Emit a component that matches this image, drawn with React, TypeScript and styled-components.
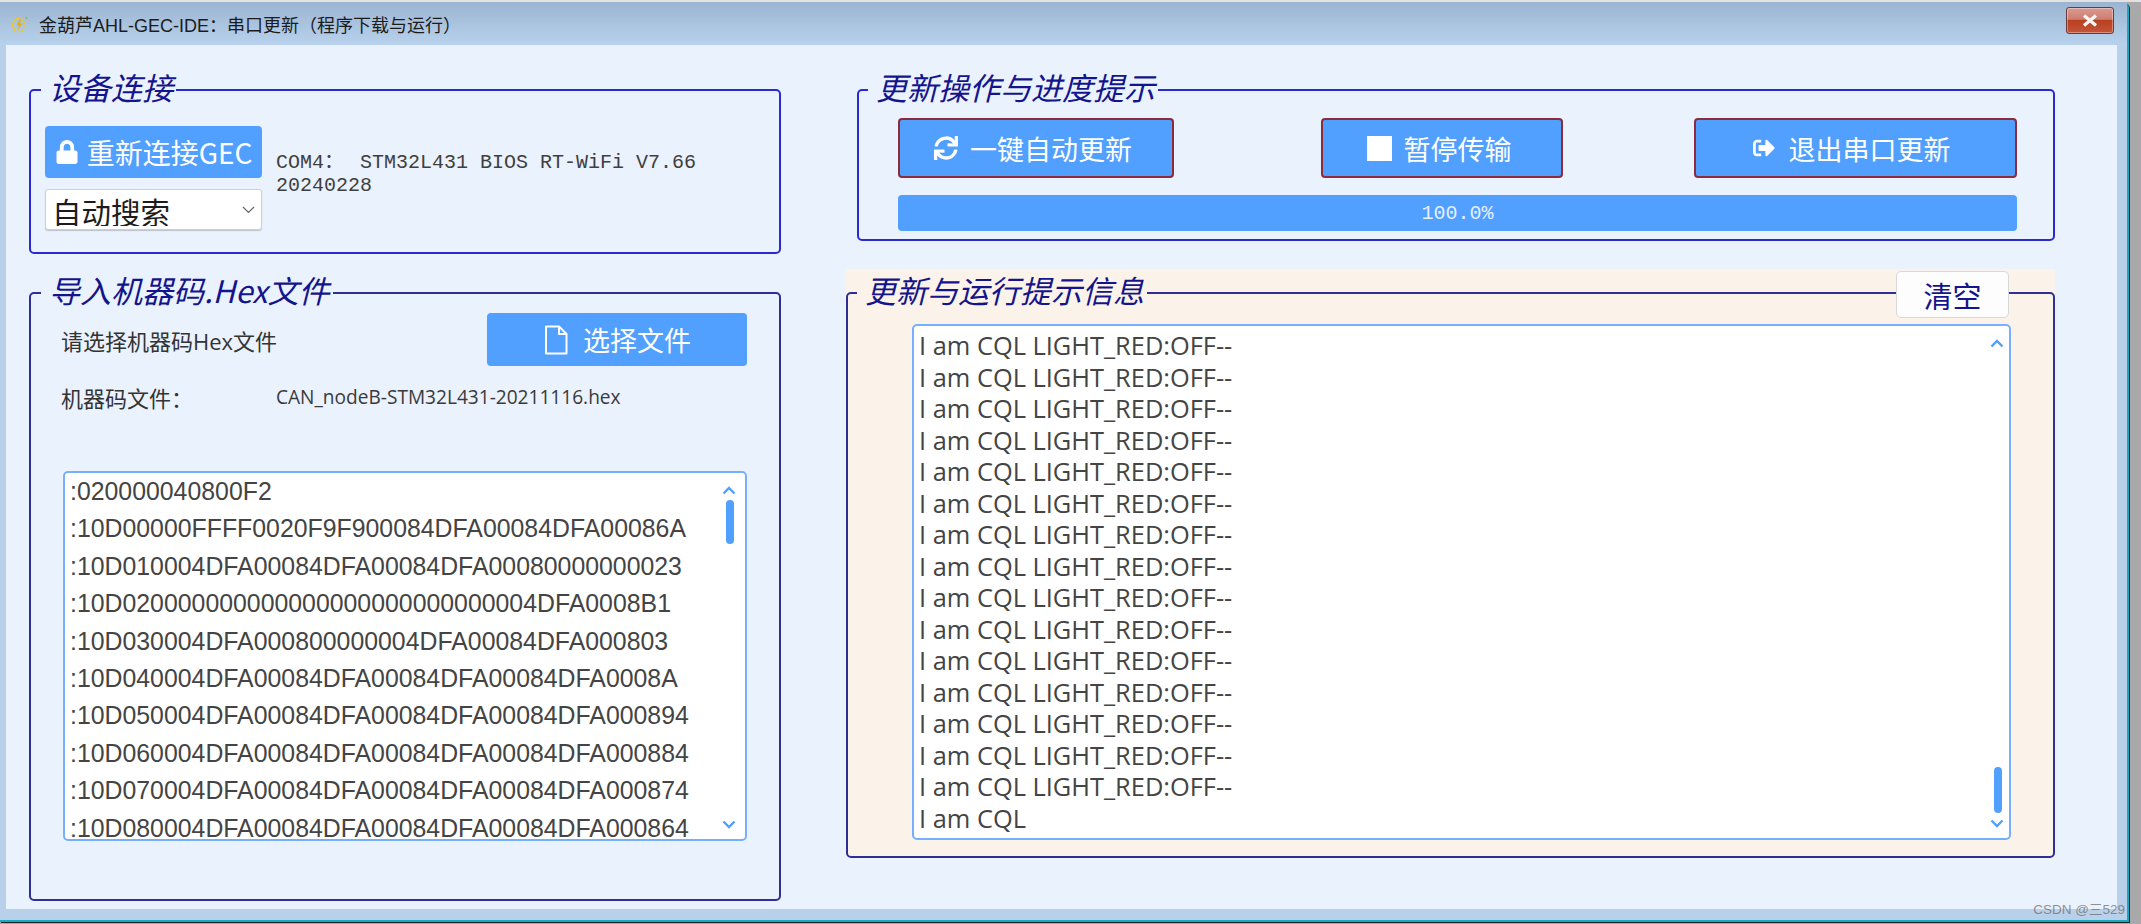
import React from 'react';
import styled, { createGlobalStyle } from 'styled-components';
import { FaLock, FaSignOutAlt, FaSquareFull, FaSync } from 'react-icons/fa';

const CJK = '"Noto Sans CJK SC", sans-serif';
const BLUE = '#519fff';

const GlobalStyle = createGlobalStyle`
  html, body {
    margin: 0;
    padding: 0;
    width: 2141px;
    height: 924px;
    overflow: hidden;
    background: #a9a9a9;
    font-family: "Open Sans", ${CJK};
  }
  * { box-sizing: border-box; }
`;

const Screen = styled.div`
  width: 2141px;
  height: 924px;
  padding-top: 2px;
  background: linear-gradient(#e2e2e2 2px, #a9a9a9 2px);
  position: relative;
`;

const Window = styled.div`
  width: 2129px;
  height: 920px;
  display: flex;
  flex-direction: column;
  background: #b8d0ea;
  border-right: 2px solid #16a9c4;
  border-bottom: 2px solid #16a9c4;
  box-shadow: 1px 1px 0 #222;
  border-top-right-radius: 6px;
`;

const TitleBar = styled.div`
  height: 43px;
  flex: none;
  display: flex;
  align-items: center;
  padding-left: 11px;
  background: linear-gradient(#9bb4d1, #b8d1ec);
`;

const TitleIcon = styled.svg`
  width: 20px;
  height: 24px;
  margin-right: 8px;
`;

const TitleText = styled.span`
  font-size: 18px;
  font-family: "Liberation Sans", ${CJK};
  color: #1c1c1c;
  flex: 1;
`;

const CloseButton = styled.div`
  width: 48px;
  height: 27px;
  margin-right: 13px;
  margin-top: -7px;
  border: 1px solid #6b3a3a;
  border-radius: 3px;
  display: flex;
  align-items: center;
  justify-content: center;
  background: linear-gradient(#d89a90 0, #cf7d70 45%, #b8401f 50%, #c4553a 100%);
  box-shadow: inset 0 0 0 1px rgba(255, 255, 255, 0.35);
`;

const Client = styled.div`
  width: 2111px;
  height: 864px;
  margin-left: 6px;
  padding: 25px 62px 0 23px;
  background: #eaf2fe;
  display: grid;
  grid-template-columns: 752px 1210px;
  column-gap: 64px;
  align-items: start;
`;

const Column = styled.div`
  display: flex;
  flex-direction: column;
`;

const Panel = styled.fieldset<{ $bright?: boolean; $height?: number; $gapTop?: number; $gapLeft?: number }>`
  margin: ${(p) => p.$gapTop ?? 0}px 0 0 ${(p) => p.$gapLeft ?? 0}px;
  padding: 0;
  min-width: 0;
  height: ${(p) => (p.$height ? `${p.$height}px` : 'auto')};
  border: 2px solid ${(p) => (p.$bright ? '#2a2ad0' : '#2e2e94')};
  border-radius: 5px;
`;

const PanelTitle = styled.legend<{ $offset: number }>`
  margin-left: ${(p) => p.$offset}px;
  padding: 0 3px 0 8px;
  height: 40px;
  line-height: 33px;
  font-family: ${CJK};
  font-style: italic;
  font-size: 31px;
  color: #14148c;
  white-space: nowrap;
`;

const ConnectRow = styled.div`
  display: flex;
  gap: 14px;
  padding: 16px 0 22px 14px;
`;

const ConnectColumn = styled.div`
  width: 217px;
  flex: none;
  display: flex;
  flex-direction: column;
  gap: 11px;
`;

const ActionButton = styled.div<{ $width: number; $height: number; $outlined?: boolean; $gapLeft?: string; $size?: number; $shift?: number }>`
  width: ${(p) => p.$width}px;
  height: ${(p) => p.$height}px;
  margin-left: ${(p) => p.$gapLeft ?? '0'};
  padding-right: ${(p) => p.$shift ?? 0}px;
  flex: none;
  display: flex;
  align-items: center;
  justify-content: center;
  background: ${BLUE};
  color: #fff;
  border-radius: 4px;
  border: ${(p) => (p.$outlined ? '2px solid #8c2b3c' : 'none')};
  font-family: ${CJK};
  font-size: ${(p) => p.$size ?? 27}px;
  white-space: nowrap;
`;

const ButtonIcon = styled.span<{ $gap: number; $size: number }>`
  display: inline-flex;
  margin-right: ${(p) => p.$gap}px;
  font-size: ${(p) => p.$size}px;
`;

const SelectBox = styled.div`
  position: relative;
  width: 217px;
  height: 41px;
`;

const PortSelect = styled.select`
  width: 100%;
  height: 100%;
  padding: 0 0 3px 6px;
  appearance: none;
  background: #fff;
  border: 1px solid #cfcfcf;
  border-radius: 3px;
  font-family: ${CJK};
  font-size: 29.500px;
  color: #1c1c1c;
  box-shadow: 0 1px 1px rgba(0, 0, 0, 0.2);
`;

const SelectArrow = styled.svg`
  position: absolute;
  right: 7px;
  top: 17px;
  width: 13px;
  height: 8px;
  pointer-events: none;
`;

const DeviceStatus = styled.div`
  width: 440px;
  margin-top: 25px;
  font-family: "Liberation Mono", ${CJK};
  font-size: 20px;
  line-height: 23px;
  color: #3f3f3f;
`;

const WideColon = styled.span`
  letter-spacing: 4px;
`;

const FileRow = styled.div<{ $gapTop?: number }>`
  display: flex;
  align-items: center;
  margin-top: ${(p) => p.$gapTop ?? 0}px;
  padding: 0 32px 0 30px;
`;

const FileLabel = styled.span<{ $width?: number }>`
  font-family: "Open Sans", ${CJK};
  font-size: 22px;
  color: #333;
  flex: ${(p) => (p.$width ? `0 0 ${p.$width}px` : '1')};
  white-space: nowrap;
`;

const FileName = styled.span`
  font-family: "Open Sans", ${CJK};
  font-size: 19.100px;
  color: #3a3a3a;
  white-space: nowrap;
`;

const TextBox = styled.div<{ $height: number }>`
  position: relative;
  height: ${(p) => p.$height}px;
  overflow: hidden;
  background: #fff;
  border: 2px solid #77afff;
  border-radius: 5px;
`;

const HexBox = styled(TextBox)`
  width: 684px;
  margin: 58px 0 0 32px;
  padding-left: 5px;
`;

const HexLine = styled.div`
  height: 37.400px;
  line-height: 37.400px;
  font-family: "Liberation Sans", sans-serif;
  font-size: 24.850px;
  color: #444;
  white-space: nowrap;
`;

const LogBox = styled(TextBox)`
  margin: 11px 42px 16px 64px;
  padding: 4px 0 0 5px;
`;

const LogLine = styled.div`
  height: 31.500px;
  line-height: 31.500px;
  font-size: 25.400px;
  color: #444;
  white-space: nowrap;
`;

const ScrollArrow = styled.svg<{ $right: number; $top?: number; $bottom?: number }>`
  position: absolute;
  right: ${(p) => p.$right}px;
  top: ${(p) => (p.$top !== undefined ? `${p.$top}px` : 'auto')};
  bottom: ${(p) => (p.$bottom !== undefined ? `${p.$bottom}px` : 'auto')};
  width: 14px;
  height: 9px;
`;

const ScrollThumb = styled.div<{ $right: number; $top: number; $length: number }>`
  position: absolute;
  right: ${(p) => p.$right}px;
  top: ${(p) => p.$top}px;
  width: 8px;
  height: ${(p) => p.$length}px;
  border-radius: 4px;
  background: ${BLUE};
`;

const ButtonRow = styled.div`
  display: flex;
  padding: 8px 36px 0 39px;
`;

const Progress = styled.div`
  height: 36px;
  margin: 17px 36px 8px 39px;
  display: flex;
  align-items: center;
  justify-content: center;
  border-radius: 4px;
  background: ${BLUE};
  font-family: "Liberation Mono", monospace;
  font-size: 20px;
  color: #e6f0ff;
`;

const MessageArea = styled.div`
  position: relative;
  margin-top: 28px;
  height: 589px;
  padding-top: 4px;
  padding-left: 1px;
  background: #fbf3e9;
`;

const ClearButton = styled.div`
  position: absolute;
  top: 2px;
  right: 46px;
  width: 113px;
  height: 47px;
  display: flex;
  align-items: center;
  justify-content: center;
  background: #fdfdfd;
  border: 1px solid #d8d8d8;
  border-radius: 5px;
  font-family: ${CJK};
  font-size: 29px;
  color: #14148c;
`;

const Watermark = styled.span`
  position: absolute;
  right: 16px;
  bottom: 6px;
  font-family: "Liberation Sans", ${CJK};
  font-size: 13.500px;
  color: rgba(110, 110, 110, 0.75);
`;

const HEX_LINES = [
  ':020000040800F2',
  ':10D00000FFFF0020F9F900084DFA00084DFA00086A',
  ':10D010004DFA00084DFA00084DFA00080000000023',
  ':10D020000000000000000000000000004DFA0008B1',
  ':10D030004DFA000800000004DFA00084DFA000803',
  ':10D040004DFA00084DFA00084DFA00084DFA0008A',
  ':10D050004DFA00084DFA00084DFA00084DFA000894',
  ':10D060004DFA00084DFA00084DFA00084DFA000884',
  ':10D070004DFA00084DFA00084DFA00084DFA000874',
  ':10D080004DFA00084DFA00084DFA00084DFA000864',
];

const LOG_LINES = [...Array(15).fill('I am CQL LIGHT_RED:OFF--'), 'I am CQL'];

const UpArrow = ({ right, top }: { right: number; top: number }) => (
  <ScrollArrow $right={right} $top={top} viewBox="0 0 14 9">
    <path d="M1.500 7.500 7 2l5.500 5.500" fill="none" stroke={BLUE} strokeWidth="2.400" />
  </ScrollArrow>
);

const DownArrow = ({ right, bottom }: { right: number; bottom: number }) => (
  <ScrollArrow $right={right} $bottom={bottom} viewBox="0 0 14 9">
    <path d="M1.500 1.500 7 7l5.500-5.500" fill="none" stroke={BLUE} strokeWidth="2.400" />
  </ScrollArrow>
);

export default function App() {
  return (
    <Screen>
      <GlobalStyle />
      <Window>
        <TitleBar>
          <TitleIcon viewBox="0 0 20 24">
            <circle cx="8" cy="13" r="6.500" fill="none" stroke="#f2c81e" strokeWidth="1.800" strokeDasharray="3 1.500" />
            <path d="M9 7 5.500 13.500H8L6.800 18 11.500 11.500H9L10 7Z" fill="#e6b400" />
            <path d="M14 4.500l3 1.500-2 1.500Z" fill="#8fb85a" />
          </TitleIcon>
          <TitleText>金葫芦AHL-GEC-IDE：串口更新（程序下载与运行）</TitleText>
          <CloseButton>
            <svg width="16" height="13" viewBox="0 0 16 13">
              <path d="M2 1.500 14 11.500M14 1.500 2 11.500" stroke="#f4f4f4" strokeWidth="3.400" />
            </svg>
          </CloseButton>
        </TitleBar>
        <Client>
          <Column>
            <Panel $bright>
              <PanelTitle $offset={10}>设备连接</PanelTitle>
              <ConnectRow>
                <ConnectColumn>
                  <ActionButton $width={217} $height={52} $size={28}>
                    <ButtonIcon $gap={8} $size={24}><FaLock /></ButtonIcon>
                    重新连接GEC
                  </ActionButton>
                  <SelectBox>
                    <PortSelect defaultValue="auto">
                      <option value="auto">自动搜索</option>
                    </PortSelect>
                    <SelectArrow viewBox="0 0 13 8">
                      <path d="M1 1l5.500 5.500L12 1" fill="none" stroke="#666" strokeWidth="1.200" />
                    </SelectArrow>
                  </SelectBox>
                </ConnectColumn>
                <DeviceStatus>COM4<WideColon>：</WideColon> STM32L431 BIOS RT-WiFi V7.66 20240228</DeviceStatus>
              </ConnectRow>
            </Panel>
            <Panel $height={628} $gapTop={19}>
              <PanelTitle $offset={10}>导入机器码.Hex文件</PanelTitle>
              <FileRow>
                <FileLabel>请选择机器码Hex文件</FileLabel>
                <ActionButton $width={260} $height={53}>
                  <ButtonIcon $gap={14} $size={26}>
                    <svg width="26" height="30" viewBox="0 0 26 30">
                      <path d="M3 1.500h13L23.500 9v19.500H3ZM16 1.500V9h7.500" fill="none" stroke="#fff" strokeWidth="2" strokeLinejoin="round" />
                    </svg>
                  </ButtonIcon>
                  选择文件
                </ActionButton>
              </FileRow>
              <FileRow $gapTop={15}>
                <FileLabel $width={215}>机器码文件：</FileLabel>
                <FileName>CAN_nodeB-STM32L431-20211116.hex</FileName>
              </FileRow>
              <HexBox $height={370}>
                {HEX_LINES.map((line, i) => (
                  <HexLine key={i}>{line}</HexLine>
                ))}
                <UpArrow right={9} top={13} />
                <ScrollThumb $right={11} $top={27} $length={44} />
                <DownArrow right={9} bottom={10} />
              </HexBox>
            </Panel>
          </Column>
          <Column>
            <Panel $bright $gapLeft={12}>
              <PanelTitle $offset={9}>更新操作与进度提示</PanelTitle>
              <ButtonRow>
                <ActionButton $width={276} $height={60} $outlined $shift={6}>
                  <ButtonIcon $gap={12} $size={24}><FaSync /></ButtonIcon>
                  一键自动更新
                </ActionButton>
                <ActionButton $width={242} $height={60} $outlined $gapLeft="147px" $shift={6}>
                  <ButtonIcon $gap={12} $size={25}><FaSquareFull /></ButtonIcon>
                  暂停传输
                </ActionButton>
                <ActionButton $width={323} $height={60} $outlined $gapLeft="auto" $shift={8}>
                  <ButtonIcon $gap={14} $size={22}><FaSignOutAlt /></ButtonIcon>
                  退出串口更新
                </ActionButton>
              </ButtonRow>
              <Progress>100.0%</Progress>
            </Panel>
            <MessageArea>
              <Panel $height={585}>
                <PanelTitle $offset={9}>更新与运行提示信息</PanelTitle>
                <LogBox $height={516}>
                  {LOG_LINES.map((line, i) => (
                    <LogLine key={i}>{line}</LogLine>
                  ))}
                  <UpArrow right={5} top={13} />
                  <ScrollThumb $right={7} $top={441} $length={46} />
                  <DownArrow right={5} bottom={10} />
                </LogBox>
              </Panel>
              <ClearButton>清空</ClearButton>
            </MessageArea>
          </Column>
        </Client>
      </Window>
      <Watermark>CSDN @三529</Watermark>
    </Screen>
  );
}
